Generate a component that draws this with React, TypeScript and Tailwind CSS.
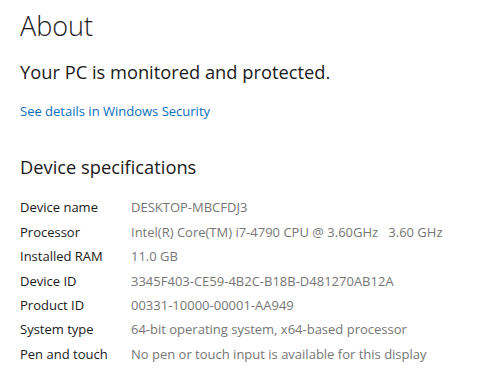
const specs: [string, string][] = [
  ["Device name", "DESKTOP-MBCFDJ3"],
  ["Processor", "Intel(R) Core(TM) i7-4790 CPU @ 3.60GHz   3.60 GHz"],
  ["Installed RAM", "11.0 GB"],
  ["Device ID", "3345F403-CE59-4B2C-B18B-D481270AB12A"],
  ["Product ID", "00331-10000-00001-AA949"],
  ["System type", "64-bit operating system, x64-based processor"],
  ["Pen and touch", "No pen or touch input is available for this display"],
];

export default function App() {
  return (
    <div className="h-[376px] w-[500px] overflow-hidden bg-white pl-[20px] font-['Open_Sans',sans-serif] text-[#1a1a1a]">
      <h1 className="pt-[8px] text-[27px] leading-[36px] font-light">About</h1>
      <p className="mt-[15px] text-[18.3px] leading-[26px]">Your PC is monitored and protected.</p>
      <a href="#" className="mt-[17px] block text-[13px] leading-[18px] text-[#0a6ec0]">
        See details in Windows Security
      </a>
      <h2 className="mt-[34px] text-[18.3px] leading-[26px]">Device specifications</h2>
      <div className="mt-[16px] flex flex-col">
        {specs.map(([label, value]) => (
          <div key={label} className="flex h-[24.4px] items-center text-[13px]">
            <span className="w-[111px] shrink-0">{label}</span>
            <span className="whitespace-pre text-[#767676]">{value}</span>
          </div>
        ))}
      </div>
    </div>
  );
}
